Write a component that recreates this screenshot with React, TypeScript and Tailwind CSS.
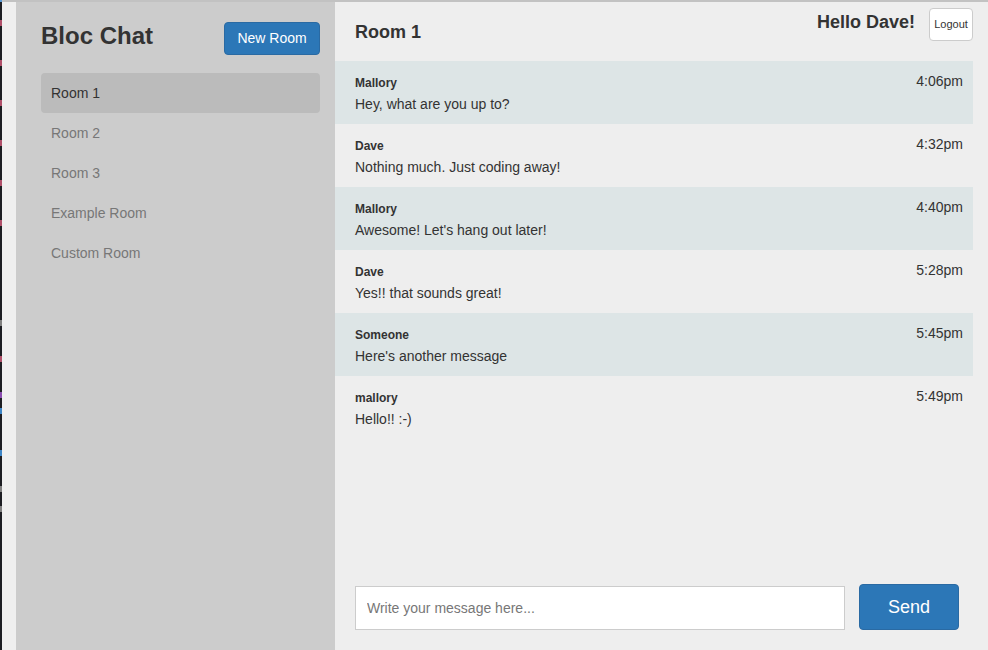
import React from "react";

const rooms = ["Room 1", "Room 2", "Room 3", "Example Room", "Custom Room"];

const messages = [
  { name: "Mallory", text: "Hey, what are you up to?", time: "4:06pm" },
  { name: "Dave", text: "Nothing much. Just coding away!", time: "4:32pm" },
  { name: "Mallory", text: "Awesome! Let's hang out later!", time: "4:40pm" },
  { name: "Dave", text: "Yes!! that sounds great!", time: "5:28pm" },
  { name: "Someone", text: "Here's another message", time: "5:45pm" },
  { name: "mallory", text: "Hello!! :-)", time: "5:49pm" },
];

export default function App() {
  return (
    <div className="w-[988px] h-[650px] flex bg-[#eeeeee] text-[#333] font-['Liberation_Sans',Arial,sans-serif] overflow-hidden">
      <div className="w-[2px] bg-[#1d1e23] flex flex-col">
        <div className="h-[2px] bg-[#5b9bd5]" />
        <div className="h-[18px]" />
        <div className="h-[6px] bg-[#b0506a]" />
        <div className="h-[34px]" />
        <div className="h-[6px] bg-[#b0506a]" />
        <div className="h-[34px]" />
        <div className="h-[6px] bg-[#b0506a]" />
        <div className="h-[34px]" />
        <div className="h-[6px] bg-[#b0506a]" />
        <div className="h-[34px]" />
        <div className="h-[6px] bg-[#b0506a]" />
        <div className="h-[34px]" />
        <div className="h-[6px] bg-[#b0506a]" />
        <div className="h-[94px]" />
        <div className="h-[6px] bg-[#808080]" />
        <div className="h-[30px]" />
        <div className="h-[6px] bg-[#b0506a]" />
        <div className="h-[30px]" />
        <div className="h-[6px] bg-[#8a4db0]" />
        <div className="h-[10px]" />
        <div className="h-[6px] bg-[#3d85c6]" />
        <div className="h-[36px]" />
        <div className="h-[6px] bg-[#3d85c6]" />
        <div className="h-[30px]" />
        <div className="h-[6px] bg-[#808080]" />
        <div className="h-[14px]" />
        <div className="h-[6px] bg-[#808080]" />
      </div>
      <div className="flex-1 flex flex-col min-w-0">
        <div className="h-[2px] bg-[#c2c2c2]" />
        <div className="flex-1 flex min-h-0">
          <div className="w-[14px] bg-[#efefef]" />
          <aside className="w-[319px] bg-[#cccccc] pt-[20px] pl-[25px] pr-[15px]">
            <div className="flex justify-between items-start">
              <h1 className="text-[24px] leading-[28px] font-bold text-[#333]">Bloc Chat</h1>
              <button className="w-[96px] h-[33px] bg-[#2c77b7] text-white text-[14px] rounded-[4px] border border-[#2a6aa3]">
                New Room
              </button>
            </div>
            <ul className="mt-[18px] flex flex-col">
              {rooms.map((r, i) => (
                <li
                  key={r}
                  className={
                    i === 0
                      ? "h-[40px] px-[10px] flex items-center text-[14px] text-[#333] bg-[#bbbbbb] rounded-[4px]"
                      : "h-[40px] px-[10px] flex items-center text-[14px] text-[#777]"
                  }
                >
                  {r}
                </li>
              ))}
            </ul>
          </aside>
          <main className="flex-1 flex flex-col pr-[15px] min-w-0">
            <header className="h-[59px] flex justify-between items-start pl-[20px]">
              <h2 className="mt-[18px] text-[18px] leading-[24px] font-bold text-[#333]">Room 1</h2>
              <div className="flex items-start">
                <span className="mt-[8px] text-[18px] leading-[24px] font-bold text-[#333]">Hello Dave!</span>
                <button className="ml-[14px] mt-[6px] w-[44px] h-[33px] bg-white border border-[#cccccc] rounded-[4px] text-[11px] text-[#333]">
                  Logout
                </button>
              </div>
            </header>
            <div className="flex-1 flex flex-col">
              {messages.map((m, i) => (
                <div
                  key={i}
                  className={
                    (i % 2 === 0 ? "bg-[#dde5e6] " : "") +
                    "h-[63px] flex justify-between items-start pl-[20px] pr-[10px]"
                  }
                >
                  <div className="pt-[14px]">
                    <div className="text-[12px] leading-[17px] font-bold text-[#333]">{m.name}</div>
                    <div className="mt-[2px] text-[14px] leading-[20px] text-[#333]">{m.text}</div>
                  </div>
                  <div className="pt-[10px] text-[14px] leading-[20px] text-[#333]">{m.time}</div>
                </div>
              ))}
            </div>
            <div className="flex items-end pl-[20px] pb-[20px]">
              <input
                className="w-[490px] h-[44px] bg-white border border-[#cccccc] px-[11px] text-[14px] text-[#333] placeholder:text-[#777] outline-none"
                placeholder="Write your message here..."
              />
              <button className="ml-[14px] w-[100px] h-[46px] bg-[#2c77b7] border border-[#2a6aa3] rounded-[4px] text-white text-[18px]">
                Send
              </button>
            </div>
          </main>
        </div>
      </div>
    </div>
  );
}
